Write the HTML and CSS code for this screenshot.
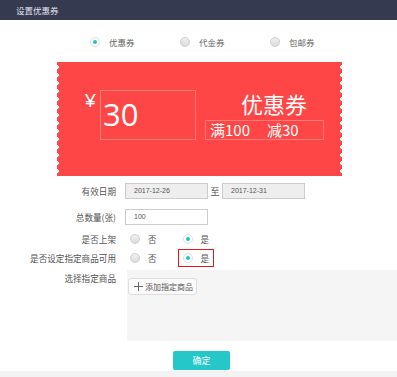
FILE: index.html
```html
<!DOCTYPE html>
<html lang="zh">
<head>
<meta charset="utf-8">
<link rel="stylesheet" href="styles.css">
</head>
<body>
<div class="page">
  <div class="header">设置优惠券</div>

  <div class="type-row">
    <label class="type-opt"><span class="radio checked"></span><span>优惠券</span></label>
    <label class="type-opt"><span class="radio"></span><span>代金券</span></label>
    <label class="type-opt"><span class="radio"></span><span>包邮券</span></label>
  </div>

  <div class="coupon">
    <div class="yen">¥</div>
    <div class="amount">30</div>
    <div class="coupon-right">
      <div class="coupon-title">优惠券</div>
      <div class="coupon-rule">满100<span class="sp"></span>减30</div>
    </div>
  </div>

  <div class="form">
    <div class="row row-date">
      <div class="label">有效日期</div>
      <div class="ctrl">
        <div class="input disabled">2017-12-26</div>
        <span class="to">至</span>
        <div class="input disabled">2017-12-31</div>
      </div>
    </div>
    <div class="row row-qty">
      <div class="label">总数量(张)</div>
      <div class="ctrl">
        <div class="input">100</div>
      </div>
    </div>
    <div class="row row-shelf">
      <div class="label">是否上架</div>
      <div class="ctrl">
        <span class="opt first"><span class="radio"></span><span>否</span></span>
        <span class="opt second"><span class="radio checked"></span><span>是</span></span>
      </div>
    </div>
    <div class="row row-goods">
      <div class="label">是否设定指定商品可用</div>
      <div class="ctrl">
        <span class="opt first"><span class="radio"></span><span>否</span></span>
        <span class="opt second marked"><span class="radio checked"></span><span>是</span></span>
      </div>
    </div>
    <div class="row row-select">
      <div class="label">选择指定商品</div>
      <div class="goods-area">
        <div class="add-btn"><span class="plus"></span>添加指定商品</div>
      </div>
    </div>
  </div>

  <div class="actions">
    <div class="ok-btn">确定</div>
  </div>
  <div class="bottom-strip"></div>
</div>
</body>
</html>
```

FILE: styles.css
```css
* { box-sizing: border-box; }
html, body { margin: 0; padding: 0; background: #fff; }
body {
  font-family: "Noto Sans CJK SC", "Noto Sans", "Liberation Sans", sans-serif;
  color: #555;
  font-size: 9px;
}
.page { width: 397px; height: 377px; overflow: hidden; display: flex; flex-direction: column; }

.header {
  height: 20px;
  line-height: 20px;
  background: #363a51;
  color: #e2e4ec;
  padding-left: 16px;
  font-size: 8.5px;
}

.type-row {
  display: flex;
  margin-top: 14px;
  height: 16px;
  align-items: center;
  padding-left: 90px;
}
.type-opt { width: 90px; display: flex; align-items: center; gap: 9px; color: #666; font-size: 8.5px; }

.radio {
  width: 10px; height: 10px; border-radius: 50%;
  border: 1px solid #cfcfcf;
  background: linear-gradient(#f0f0f0, #dcdcdc);
  flex: none;
  position: relative;
}
.radio.checked { background: #fff; border-color: #ddd; }
.radio.checked::after {
  content: ""; position: absolute; left: 2px; top: 2px;
  width: 4px; height: 4px; border-radius: 50%; background: #1fc4c6;
}

.coupon {
  margin: 12px 0 0 57px;
  width: 285px; height: 114px;
  background-color: #ff4646;
  background-image:
    radial-gradient(circle at 0 4px, #fff 1.6px, transparent 2.2px),
    radial-gradient(circle at 4px 4px, #fff 1.6px, transparent 2.2px);
  background-size: 4px 8px, 4px 8px;
  background-repeat: repeat-y, repeat-y;
  background-position: left 0 top 1px, right 0 top 1px;
  display: flex;
  align-items: flex-start;
  padding: 28px 0 0 28px;
  color: #fff;
}
.yen { width: 15px; font-size: 19px; line-height: 22px; margin-top: 0; font-family: "Liberation Sans", sans-serif; }
.amount {
  width: 96px; height: 50px;
  border: 1px solid rgba(255,255,255,0.3);
  font-size: 31px; line-height: 46px;
  padding-left: 2px;
  font-family: "Open Sans", "Noto Sans", sans-serif;
}
.coupon-right { margin-left: 9px; width: 119px; display: flex; flex-direction: column; }
.coupon-title { font-size: 22px; line-height: 26px; padding-left: 36px; margin-top: 0; }
.coupon-rule {
  margin-top: 4px;
  height: 20px;
  border: 1px solid rgba(255,255,255,0.3);
  font-size: 15px; line-height: 18px;
  padding-left: 4px;
  white-space: nowrap;
}
.coupon-rule .sp { display: inline-block; width: 17px; }

.form { margin-top: 7px; display: flex; flex-direction: column; }
.row { display: flex; align-items: center; }
.label { width: 116px; text-align: right; padding-right: 0; color: #555; font-size: 8.6px; }
.ctrl { margin-left: 9px; display: flex; align-items: center; }

.input {
  width: 83px; height: 16px;
  border: 1px solid #ccc;
  background: #fff;
  font-size: 7px; line-height: 14px;
  padding-left: 8px;
  color: #555;
  font-family: "Liberation Sans", sans-serif;
}
.input.disabled { background: #eee; }
.to { width: 14px; text-align: center; font-size: 9px; color: #555; }

.row-date { height: 16px; }
.row-qty { height: 16px; margin-top: 10px; }
.row-shelf { height: 18px; margin-top: 5px; }
.row-goods { height: 18px; margin-top: 1px; }

.opt {
  display: inline-flex; align-items: center; gap: 8px;
  height: 18px;
  border: 1px solid transparent;
  padding: 0 4px 0 4px;
  color: #555;
  font-size: 8.6px;
}
.opt.first { margin-left: 0; }
.opt.second { margin-left: 16px; }
.opt.marked { border-color: #e8141e; }

.row-select { align-items: flex-start; margin-top: 3px; }
.row-select .label { padding-top: 2px; }
.goods-area {
  margin-left: 11px;
  width: 270px; height: 71px;
  background: #f5f5f5;
  padding: 8px 0 0 1px;
}
.add-btn {
  display: inline-flex; align-items: center;
  width: 69px; height: 17px;
  background: #fbfbfb;
  border: 1px solid #ddd;
  border-radius: 3px;
  font-size: 8px;
  color: #555;
  padding-left: 5px;
}
.plus { width: 9px; height: 9px; position: relative; margin-right: 2px; flex: none; }
.plus::before, .plus::after { content: ""; position: absolute; background: #666; }
.plus::before { left: 0; top: 4px; width: 9px; height: 1px; }
.plus::after { left: 4px; top: 0; width: 1px; height: 9px; }

.actions { display: flex; justify-content: flex-start; padding-left: 173px; margin-top: 10px; }
.ok-btn {
  width: 57px; height: 19px;
  background: #25c7c9;
  border-radius: 2px;
  color: #fff;
  font-size: 9px;
  line-height: 19px;
  text-align: center;
}
.bottom-strip { margin-top: 1px; flex: 1; background: #f3f3f3; }
```
